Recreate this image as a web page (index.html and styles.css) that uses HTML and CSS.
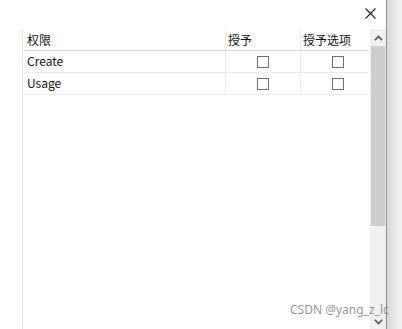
FILE: index.html
```html
<!DOCTYPE html>
<html>
<head>
  <meta charset="UTF-8">
  <title>权限</title>
  <link rel="stylesheet" href="styles.css">
</head>
<body>
  <div class="dialog">
    <div class="titlebar">
      <svg class="close" width="11" height="11" viewBox="0 0 11 11">
        <path d="M0.5 0.5 L10.5 10.5 M10.5 0.5 L0.5 10.5" stroke="#222" stroke-width="1.1" fill="none"/>
      </svg>
    </div>

    <div class="content">
      <div class="grid">
        <div class="row head">
          <div class="cell name">权限</div>
          <div class="cell grant">授予</div>
          <div class="cell option">授予选项</div>
        </div>
        <div class="row">
          <div class="cell name">Create</div>
          <div class="cell grant"><span class="box"></span></div>
          <div class="cell option"><span class="box"></span></div>
        </div>
        <div class="row">
          <div class="cell name">Usage</div>
          <div class="cell grant"><span class="box"></span></div>
          <div class="cell option"><span class="box"></span></div>
        </div>
      </div>

      <div class="scrollbar">
        <div class="arrow">
          <svg width="9" height="6" viewBox="0 0 9 6"><path d="M0.8 5.2 L4.5 1.5 L8.2 5.2" stroke="#555" stroke-width="1.6" fill="none"/></svg>
        </div>
        <div class="thumb"></div>
        <div class="track"></div>
        <div class="arrow down">
          <svg width="9" height="6" viewBox="0 0 9 6"><path d="M0.8 0.8 L4.5 4.5 L8.2 0.8" stroke="#555" stroke-width="1.6" fill="none"/></svg>
        </div>
      </div>
    </div>
  </div>
  <div class="shade"></div>

  <div class="watermark">CSDN @yang_z_lc</div>
</body>
</html>
```

FILE: styles.css
```css
body {
  margin: 0;
  height: 329px;
  display: flex;
  background: #fff;
  font: 12px/1.2 "Noto Sans CJK SC", "Noto Sans", sans-serif;
  color: #111;
  overflow: hidden;
}

.dialog {
  width: 386px;
  display: flex;
  flex-direction: column;
  border-right: 1px solid #8c8c8c;
  background: #fff;
}

.shade {
  flex: 1 1 0%;
  background: linear-gradient(to right, #dadada, #f3f3f3);
}

.titlebar {
  height: 29px;
  display: flex;
  justify-content: flex-end;
  align-items: flex-start;
  padding-right: 10px;
}

  .titlebar .close {
    margin-top: 8px;
  }

.content {
  flex: 1 1 0%;
  display: flex;
  padding-left: 22px;
}

.grid {
  flex: 1 1 0%;
  border-left: 1px solid #e6e6e6;
}

.row {
  display: flex;
  height: 21px;
  border-bottom: 1px solid #ececec;
  margin-left: 1px;
}

  .row.head {
    height: 20px;
    padding-top: 1px;
    border-bottom-color: #d9d9d9;
  }

.cell {
  display: flex;
  align-items: center;
  box-sizing: border-box;
}

  .cell.name {
    width: 202px;
    padding-left: 3px;
    border-right: 1px solid #ececec;
  }

  .cell.grant {
    width: 75px;
    padding-left: 2px;
    border-right: 1px solid #ececec;
  }

  .cell.option {
    flex: 1 1 0%;
    padding-left: 2px;
  }

  .row:not(.head) .cell.grant,
  .row:not(.head) .cell.option {
    padding-left: 31px;
  }

.box {
  width: 10px;
  height: 10px;
  border: 1px solid #6e6e6e;
  background: #fff;
}

.scrollbar {
  width: 16px;
  margin-left: 1px;
  display: flex;
  flex-direction: column;
  background: #f0f0f0;
}

  .scrollbar .arrow {
    height: 17px;
    display: flex;
    align-items: center;
    justify-content: center;
  }

  .scrollbar .arrow.down {
    height: 10px;
    align-items: flex-start;
    padding-top: 6px;
  }

  .scrollbar .thumb {
    height: 180px;
    margin: 0 1px;
    background: #cdcdcd;
  }

  .scrollbar .track {
    flex: 1 1 0%;
  }

.watermark {
  position: absolute;
  left: 290px;
  top: 304px;
  font: 12px/1 "Noto Sans", "Noto Sans CJK SC", sans-serif;
  color: rgba(110, 110, 110, 0.75);
}
```
